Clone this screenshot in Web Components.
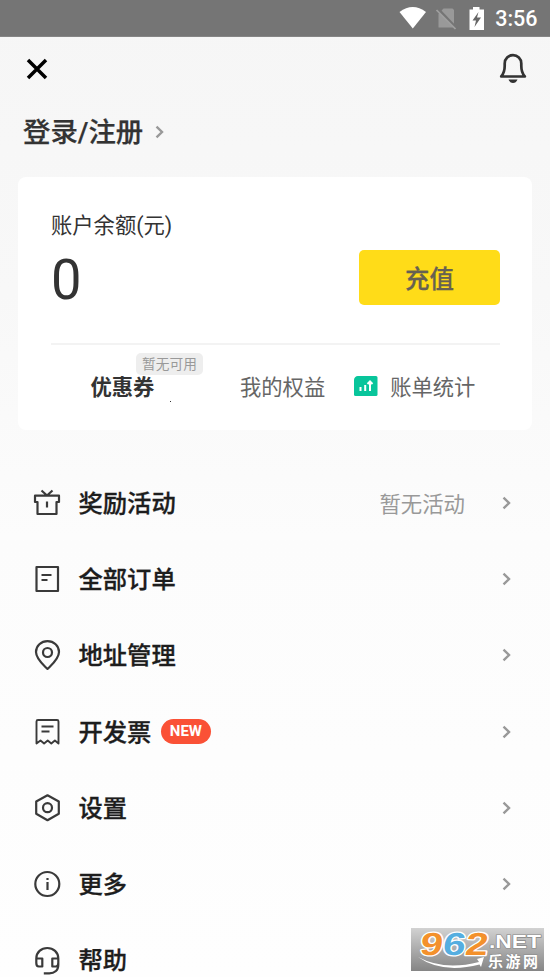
<!DOCTYPE html>
<html lang="zh-CN">
<head>
<meta charset="utf-8">
<title>账户</title>
<style>
html,body{margin:0;height:977px;overflow:hidden}
body{font-family:Roboto,"Noto Sans CJK SC",sans-serif;color:#333}
</style>
</head>
<body>
<account-page></account-page>
<script>
const define = (name, html) => {
  const t = document.createElement('template');
  t.innerHTML = html;
  customElements.define(name, class extends HTMLElement {
    constructor() {
      super();
      this.attachShadow({mode: 'open'}).append(t.content.cloneNode(true));
    }
  });
};

define('status-bar', `
<style>
:host{display:flex;height:37px;box-sizing:border-box;background:#757575;color:#fff;justify-content:flex-end;align-items:center;padding-right:12.500px;border-bottom:1px solid #858585}
span{font:500 21.5px/36px Roboto,sans-serif;margin-left:10px;padding-top:2px}
svg{display:block}
</style>
<svg width="90" height="36" viewBox="0 0 90 36"><path d="M4.500 12Q17.800 2 31 12L17.800 28.500Z" fill="#fff"/>
<path d="M48.500 8.500H57.500L59 10V27.500H43.500V14Z" fill="#999"/><path d="M42.500 8.500L62 29" stroke="#757575" stroke-width="3"/><path d="M41.500 10L60.500 29" stroke="#a0a0a0" stroke-width="1.700"/>
<path d="M74.500 9.500H78V7H84.500V9.500H89V30H74.500Z" fill="#fff"/><path d="M83.500 12L77.500 20.500H81L79.500 27L86 17.500H82Z" fill="#666"/></svg>
<span>3:56</span>`);

define('top-bar', `
<style>
:host{display:flex;height:64px;box-sizing:border-box;justify-content:space-between;align-items:center;padding:0 23px 0 26px}
svg{display:block}
</style>
<svg width="22" height="22" viewBox="0 0 22 22"><path d="M2 2L20 20M20 2L2 20" stroke="#000" stroke-width="3.500"/></svg>
<svg width="28" height="32" viewBox="0 0 28 32" fill="none"><path d="M2.200 23.500C4.800 20.500 5.700 18 5.700 13V10.500C5.700 5.500 9.500 2.200 14 2.200S22.300 5.500 22.300 10.500V13C22.300 18 23.200 20.500 25.800 23.500Z" stroke="#333" stroke-width="2.700" stroke-linejoin="round"/><path d="M9.500 26.500H18.500Q17 30 14 30T9.500 26.500Z" fill="#333"/></svg>`);

define('chevron-icon', `
<style>:host{display:block;width:9px;height:14px}svg{display:block}</style>
<svg width="9" height="14" viewBox="0 0 9 14"><path d="M1.500 1.700L7 7L1.500 12.300" fill="none" stroke="#999" stroke-width="2.400"/></svg>`);

define('login-link', `
<style>
:host{display:flex;height:61px;align-items:center;padding-left:23px;gap:12px;font-size:27.400px;font-weight:500;line-height:40px;-webkit-text-stroke:.25px currentColor}
span{padding-top:3px}
</style><span><slot></slot></span><chevron-icon></chevron-icon>`);

define('balance-card', `
<style>
:host{display:block;margin:15px 18px 0;height:253px;box-sizing:border-box;background:#fff;border-radius:8px;padding:34px 32px 0 33px}
.top{display:flex;height:132px;justify-content:space-between;border-bottom:2px solid #f3f3f3}
.label{font-size:21.300px;line-height:30px}
.num{font-size:56px;line-height:60px;margin-top:9px;transform:scaleX(.97);transform-origin:0}
button{margin:39px 0 0;border:0;width:141px;height:55px;background:#ffdc18;border-radius:5px;font:500 24.500px/53px "Noto Sans CJK SC",sans-serif;color:#666152;padding:0;-webkit-text-stroke:.25px currentColor}
</style>
<div class="top"><div><div class="label"><slot name="label"></slot></div><div class="num"><slot name="amount"></slot></div></div><button><slot name="action"></slot></button></div>
<slot></slot>`);

define('card-tabs', `
<style>
:host{display:flex;height:84px;padding-left:39.500px;align-items:center;font-size:21.300px;line-height:30px;color:#666;white-space:nowrap}
b{font-weight:700;color:#333;position:relative;width:149.500px}
.tag{position:absolute;left:45.500px;top:-20px;width:67px;height:22px;border-radius:5px;background:#eee;color:#999;font-size:13.700px;font-weight:400;line-height:22px;text-align:center}
i{position:absolute;left:79.500px;top:28px;width:1px;height:1px;background:#333}
:host{padding-top:2px;box-sizing:border-box}
svg{margin:-5px 12px 0 29px}
</style>
<b>优惠券<span class="tag">暂无可用</span><i></i></b><span>我的权益</span>
<svg width="24" height="20" viewBox="0 0 24 20"><path d="M4 0H22Q23.500 0 23.500 1.500V18.500Q23.500 20 22 20H1.500Q0 20 0 18.500V4Q.3 .3 4 0Z" fill="#08c59b"/><path d="M6.500 11V15M11.200 9V15M16 15V6M13.500 8L16 5.500L18.500 8" stroke="#fff" stroke-width="2" fill="none"/></svg><span>账单统计</span>`);

const icons = {
  gift: '<path d="M2 7.700H26V14H23.500V26H4.500V14H2ZM14 13.500V19.500M8.500 2.500L14 7.500L19.500 2.500"/>',
  order: '<path d="M3.500 3H25V27H3.500ZM8.500 11H18.500M8.500 16H14.500"/>',
  pin: '<path d="M14.500 29C10.500 25 3 19 3 12A11.500 10.900 0 0 1 26 12C26 19 18.500 25 14.500 29Z"/><circle cx="14.500" cy="12.500" r="4.500"/>',
  invoice: '<path stroke-width="1.900" d="M3.500 26.500V4.500Q3.500 3 5 3H24Q25.500 3 25.500 4.500V26.500L21.900 23.500L18.300 26.500L14.700 23.500L11.100 26.500L7.500 23.500ZM8.500 9.500H20.500M8.500 14.500H16.500"/>',
  hex: '<path d="M14.500 2.300L25.800 8.500V20.800L14.500 27.200L3.200 20.800V8.500Z"/><circle cx="14.500" cy="14.700" r="4.500"/>',
  info: '<circle cx="14.300" cy="15" r="12"/><path d="M14.500 13V21M14.500 9V11"/>',
  help: '<path d="M3.300 18V13.500C3.300 7 8.300 3 14.300 3S25.300 7 25.300 13.500V20C25.300 25.500 21.300 28.300 16.300 28.300H10.800M3.300 13.500H9.300V21.500H5.800Q3.300 21.500 3.300 18ZM25.300 13.500H19.300V21.500H22.800Q25.300 21.500 25.300 18"/>'
};
customElements.define('menu-row', class extends HTMLElement {
  constructor() {
    super();
    this.attachShadow({mode: 'open'}).innerHTML = `
<style>
:host{display:flex;height:76.200px;align-items:center;padding:0 39px 0 33px;font-size:24.300px;font-weight:500;line-height:36px;color:#1d1d1d}
svg{display:block;margin-right:17.500px;flex:none}
chevron-icon{margin-left:37px}
.title{padding-top:2px;-webkit-text-stroke:.3px currentColor}
.space{flex:1}
::slotted([slot=note]){font-size:21.400px;font-weight:400;color:#999;padding-top:3px}
::slotted([slot=badge]){margin-left:9.500px;width:50px;height:25px;border-radius:13px;background:#fa5136;color:#fff;font:700 15px/24px Roboto,sans-serif;text-align:center}
</style>
<svg width="28" height="30" viewBox="0 0 28 30" fill="none" stroke="#3a3a3a" stroke-width="2.200" stroke-linejoin="round">${icons[this.getAttribute('icon')] || ''}</svg>
<span class="title"><slot></slot></span><slot name="badge"></slot><div class="space"></div><slot name="note"></slot><chevron-icon></chevron-icon>`;
  }
});

define('site-mark', `
<style>
:host{display:block;position:absolute;left:411px;top:928px;width:133px;height:43px;background:linear-gradient(#d2d2d2,#858585)}
svg{display:block}
text{font-family:"Liberation Sans",sans-serif;font-weight:700}
</style>
<svg width="133" height="43" viewBox="0 0 133 43">
<text transform="translate(8 26.500) skewX(-8)" font-size="32" stroke="#fff" paint-order="stroke" stroke-width="2.500" stroke-linejoin="round" textLength="68" lengthAdjust="spacingAndGlyphs"><tspan fill="#f3912c">9</tspan><tspan fill="#55aee0">6</tspan><tspan fill="#f3912c">2</tspan></text>
<text x="78" y="20" font-size="18" textLength="52" lengthAdjust="spacingAndGlyphs" fill="#fff" stroke="#888" stroke-width="1.200" paint-order="stroke">.NET</text>
<path d="M7 29Q33 43 68 34L66 31L73 29L70 39L68.500 36.500Q31 46 7 29Z" fill="#fff"/>
<text x="77" y="38.500" style="font-family:'Noto Sans CJK SC',sans-serif" font-size="15" textLength="50" fill="#fff" stroke="#888" stroke-width="1" paint-order="stroke">乐游网</text></svg>`);

define('account-page', `
<style>
:host{display:block;position:relative;width:550px;height:977px;overflow:hidden;background:linear-gradient(#f6f6f6,#f8f8f8 30%,#fcfcfc 55%,#fefefe)}
.menu{padding-top:35px}
</style>
<status-bar></status-bar><top-bar></top-bar>
<login-link>登录/注册</login-link>
<balance-card><span slot="label">账户余额(元)</span><span slot="amount">0</span><span slot="action">充值</span><card-tabs></card-tabs></balance-card>
<div class="menu">
<menu-row icon="gift">奖励活动<span slot="note">暂无活动</span></menu-row>
<menu-row icon="order">全部订单</menu-row>
<menu-row icon="pin">地址管理</menu-row>
<menu-row icon="invoice">开发票<span slot="badge">NEW</span></menu-row>
<menu-row icon="hex">设置</menu-row>
<menu-row icon="info">更多</menu-row>
<menu-row icon="help">帮助</menu-row>
</div><site-mark></site-mark>`);
</script>
</body>
</html>
